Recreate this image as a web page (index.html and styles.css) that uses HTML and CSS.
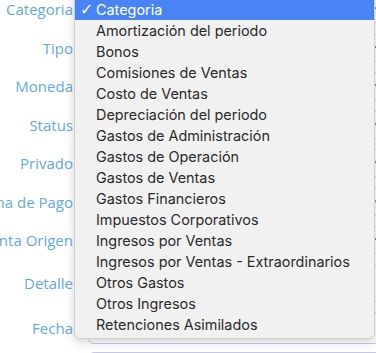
FILE: index.html
```html
<!DOCTYPE html>
<html lang="es">
<head>
    <meta charset="UTF-8">
    <meta name="viewport" content="width=device-width, initial-scale=1.0">
    <title>Movimiento</title>
    <link rel="stylesheet" href="styles.css">
</head>
<body>

<!-- Formulario -->
<form class="form">
    <div class="row">
        <label class="label"><span>Categoria</span></label>
        <div class="field select"></div>
    </div>
    <div class="row">
        <label class="label"><span>Tipo</span></label>
        <div class="field select"></div>
    </div>
    <div class="row">
        <label class="label"><span>Moneda</span></label>
        <div class="field select"></div>
    </div>
    <div class="row">
        <label class="label"><span>Status</span></label>
        <div class="field select"></div>
    </div>
    <div class="row">
        <label class="label"><span>Privado</span></label>
        <div class="field select"></div>
    </div>
    <div class="row">
        <label class="label"><span>Forma de Pago</span></label>
        <div class="field select"></div>
    </div>
    <div class="row">
        <label class="label"><span>Cuenta Origen</span></label>
        <div class="field select"></div>
    </div>
    <div class="row row-detalle">
        <label class="label"><span>Detalle</span></label>
        <div class="field textarea"></div>
    </div>
    <div class="row row-fecha">
        <label class="label"><span>Fecha</span></label>
        <div class="field"></div>
    </div>
    <div class="row">
        <label class="label"><span></span></label>
        <div class="field"></div>
    </div>
</form>

<!-- Menu abierto del select -->
<ul class="menu">
    <li class="selected"><span class="check">&#10003;</span>Categoria</li>
    <li>Amortización del periodo</li>
    <li>Bonos</li>
    <li>Comisiones de Ventas</li>
    <li>Costo de Ventas</li>
    <li>Depreciación del periodo</li>
    <li>Gastos de Administración</li>
    <li>Gastos de Operación</li>
    <li>Gastos de Ventas</li>
    <li>Gastos Financieros</li>
    <li>Impuestos Corporativos</li>
    <li>Ingresos por Ventas</li>
    <li>Ingresos por Ventas - Extraordinarios</li>
    <li>Otros Gastos</li>
    <li>Otros Ingresos</li>
    <li>Retenciones Asimilados</li>
</ul>

</body>
</html>
```

FILE: styles.css
```css
body {
    margin: 0;
    padding: 0;
    background: #ffffff;
    overflow: hidden;
    height: 353px;
    position: relative;
}

.form {
    margin-top: -5px;
    display: flex;
    flex-direction: column;
    gap: 10.5px;
}

.row {
    display: flex;
    align-items: center;
    gap: 15px;
    height: 28px;
}
.row-detalle {
    height: 37px;
}
.row-fecha {
    height: 32px;
    margin-bottom: -2.5px;
}

.label {
    width: 73px;
    flex: none;
    display: flex;
    justify-content: flex-end;
    white-space: nowrap;
    font-family: "Open Sans", sans-serif;
    font-size: 15px;
    color: #66aadd;
}

.field {
    width: 296px;
    flex: none;
    align-self: stretch;
    box-sizing: border-box;
    border: 1px solid #c4c9ec;
    border-radius: 6px;
    background: #fff;
    position: relative;
}

/* flecha del select */
.select::after {
    content: "";
    position: absolute;
    right: 1px;
    top: 50%;
    width: 5px;
    height: 5px;
    margin-top: -4px;
    border-left: 1.5px solid #444;
    border-bottom: 1.5px solid #444;
    transform: rotate(-45deg);
}

.menu {
    position: absolute;
    left: 74px;
    top: -7px;
    width: 301px;
    margin: 0;
    padding: 5px 0 3px 0;
    list-style: none;
    background: #f1f1f1;
    border: 1px solid #cfcfcf;
    border-radius: 6px;
    box-shadow: 0 3px 10px rgba(0, 0, 0, 0.18);
    font-family: "Inter", sans-serif;
    font-size: 14.4px;
    color: #2b2b2b;
    box-sizing: border-box;
}
.menu li {
    height: 21px;
    line-height: 21px;
    padding-left: 21px;
    position: relative;
    white-space: nowrap;
}
.menu li.selected {
    background: #4a83f6;
    color: #fff;
}
.check {
    position: absolute;
    left: 5px;
    top: 0;
    font-size: 16px;
    font-family: "DejaVu Sans", sans-serif;
}
```
